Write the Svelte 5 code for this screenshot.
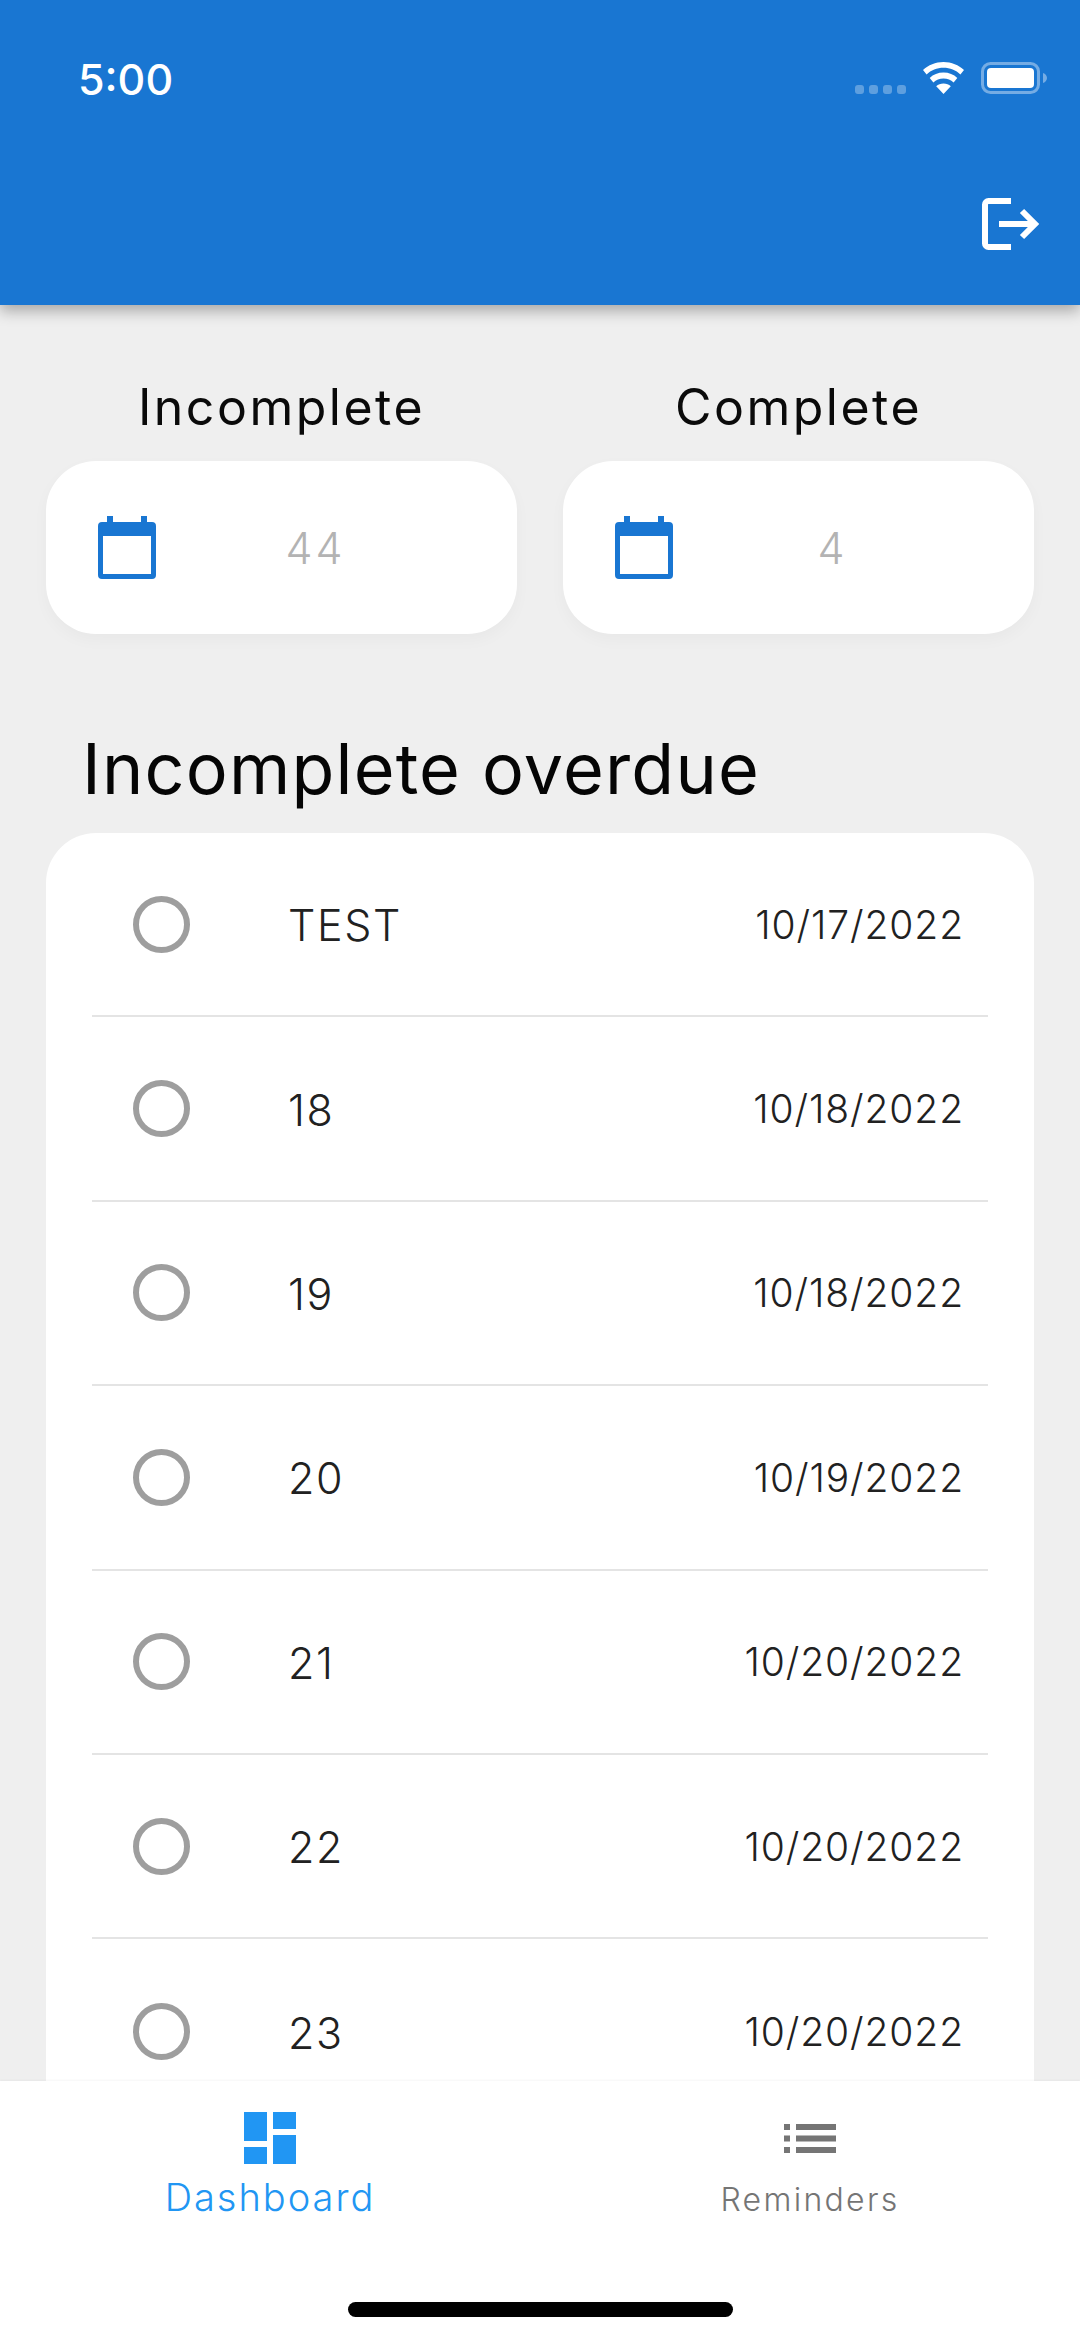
<script>
  // Dashboard screen: task counters and overdue reminder list
  const stats = [
    { label: 'Incomplete', value: 44 },
    { label: 'Complete', value: 4 }
  ];

  const overdue = [
    { name: 'TEST', date: '10/17/2022' },
    { name: '18', date: '10/18/2022' },
    { name: '19', date: '10/18/2022' },
    { name: '20', date: '10/19/2022' },
    { name: '21', date: '10/20/2022' },
    { name: '22', date: '10/20/2022' },
    { name: '23', date: '10/20/2022' }
  ];
</script>

<div class="screen">
  <header class="appbar">
    <div class="statusbar">
      <span class="time">5:00</span>
      <div class="status-icons">
        <div class="signal"><i></i><i></i><i></i><i></i></div>
        <svg class="wifi" viewBox="0 0 43 32" aria-hidden="true">
          <path d="M21.5 0C13.5 0 6.3 3 1 8l3.6 4.4C9 8.300 15 5.800 21.500 5.800S34 8.300 38.400 12.400L42 8C36.700 3 29.500 0 21.500 0Z" fill="#fff" />
          <path d="M21.500 10.500c-5.400 0-10.200 2-13.800 5.400l3.700 4.500c2.600-2.400 6.200-3.900 10.100-3.900s7.500 1.500 10.100 3.900l3.700-4.500c-3.600-3.400-8.400-5.400-13.800-5.400Z" fill="#fff" />
          <path d="M21.500 21.500c-2.900 0-5.400 1-7.300 2.700l7.300 7.800 7.300-7.800c-1.900-1.700-4.400-2.700-7.300-2.700Z" fill="#fff" />
        </svg>
        <svg class="battery" viewBox="0 0 67 32" aria-hidden="true">
          <rect x="1.500" y="1.500" width="56" height="29" rx="8" fill="none" stroke="#fff" stroke-opacity="0.4" stroke-width="3" />
          <rect x="6" y="6" width="47" height="20" rx="4" fill="#fff" />
          <path d="M62 11c2.500.8 4 2.800 4 5s-1.500 4.200-4 5Z" fill="#fff" fill-opacity="0.4" />
        </svg>
      </div>
    </div>
    <div class="actions">
      <svg class="logout" viewBox="0 0 58 52" aria-hidden="true">
        <path d="M29 3H6.500A3.500 3.500 0 0 0 3 6.500v39A3.500 3.500 0 0 0 6.500 49H29" fill="none" stroke="#fff" stroke-width="6" />
        <path d="M17 26h37M40 13l13 13-13 13" fill="none" stroke="#fff" stroke-width="6" />
      </svg>
    </div>
  </header>

  <main class="content">
    <section class="stats">
      {#each stats as stat}
        <div class="stat">
          <h2>{stat.label}</h2>
          <div class="stat-card">
            <svg class="calendar" viewBox="0 0 58 63" aria-hidden="true">
              <path fill-rule="evenodd" d="M9 0h6v6h28V0h6v6h5a4 4 0 0 1 4 4v49a4 4 0 0 1-4 4H4a4 4 0 0 1-4-4V10a4 4 0 0 1 4-4h5ZM5 20v38h48V20Z" fill="#1976d2" />
            </svg>
            <span class="stat-value">{stat.value}</span>
          </div>
        </div>
      {/each}
    </section>

    <h1>Incomplete overdue</h1>

    <ul class="list">
      {#each overdue as item}
        <li>
          <span class="radio"></span>
          <span class="name">{item.name}</span>
          <span class="date">{item.date}</span>
        </li>
      {/each}
    </ul>
  </main>

  <nav class="tabbar">
    <div class="tabs">
      <div class="tab active">
        <svg class="tab-icon" viewBox="0 0 52 52" aria-hidden="true">
          <path d="M0 0h23v29H0ZM29 0h23v17H29ZM29 23h23v29H29ZM0 35h23v17H0Z" fill="#2196f3" />
        </svg>
        <span>Dashboard</span>
      </div>
      <div class="tab">
        <svg class="tab-icon" viewBox="0 0 52 52" aria-hidden="true">
          <path d="M0 12h6v6H0ZM12 12h40v6H12ZM0 23.500h6v6H0ZM12 23.500h40v6H12ZM0 35h6v6H0ZM12 35h40v6H12Z" fill="#757575" />
        </svg>
        <span>Reminders</span>
      </div>
    </div>
    <div class="home-bar"></div>
  </nav>
</div>

<style>
  :global(body) {
    margin: 0;
    background: #efefef;
  }

  .screen {
    display: flex;
    flex-direction: column;
    width: 1080px;
    height: 2340px;
    overflow: hidden;
    background: #efefef;
    font-family: Inter, 'Liberation Sans', sans-serif;
  }

  .appbar {
    position: relative;
    z-index: 2;
    flex: none;
    box-sizing: border-box;
    height: 305px;
    padding: 52px 32px 0 78px;
    background: #1976d2;
    box-shadow: 0 6px 14px rgba(0, 0, 0, 0.3);
  }

  .statusbar {
    display: flex;
    align-items: flex-start;
    justify-content: space-between;
  }

  .time {
    color: #fff;
    font-size: 43px;
    font-weight: 500;
    line-height: 54px;
  }

  .status-icons {
    display: flex;
    align-items: flex-start;
    padding-top: 10px;
  }

  .signal {
    display: flex;
    gap: 5px;
    margin: 23px 16px 0 0;
  }

  .signal i {
    width: 9px;
    height: 9px;
    border-radius: 3px;
    background: rgba(255, 255, 255, 0.3);
  }

  .wifi {
    width: 43px;
    height: 32px;
    margin-right: 16px;
  }

  .battery {
    width: 67px;
    height: 32px;
  }

  .actions {
    display: flex;
    justify-content: flex-end;
    margin-top: 92px;
    padding-right: 8px;
  }

  .logout {
    width: 58px;
    height: 52px;
  }

  .content {
    flex: 1;
    min-height: 0;
    overflow: hidden;
    padding: 0 46px;
  }

  .stats {
    display: grid;
    grid-template-columns: 471px 471px;
    gap: 46px;
    padding-top: 67px;
  }

  h2 {
    margin: 0 0 19px;
    color: #0a0a0a;
    font-size: 50px;
    font-weight: 400;
    line-height: 70px;
    text-align: center;
    letter-spacing: 2.5px;
  }

  .stat-card {
    display: flex;
    align-items: center;
    height: 173px;
    padding-left: 52px;
    border-radius: 50px;
    background: #fff;
    box-shadow: 0 6px 16px rgba(0, 0, 0, 0.03);
  }

  .calendar {
    flex: none;
    width: 58px;
    height: 63px;
    margin-top: -1px;
  }

  .stat-value {
    flex: 1;
    padding-right: 42px;
    color: #b3b3b3;
    font-size: 43px;
    font-weight: 300;
    text-align: center;
    letter-spacing: 3px;
  }

  h1 {
    margin: 90px 0 19px 36px;
    color: #050505;
    font-size: 70px;
    font-weight: 400;
    line-height: 90px;
    letter-spacing: 1.2px;
  }

  .list {
    margin: 0;
    padding: 0 46px;
    border-radius: 50px 50px 0 0;
    background: #fff;
    list-style: none;
  }

  li {
    display: flex;
    align-items: center;
    box-sizing: border-box;
    height: 184.4px;
    border-bottom: 2px solid #e4e4e4;
    color: #212121;
  }

  li:last-child {
    border-bottom: 0;
  }

  .radio {
    flex: none;
    box-sizing: border-box;
    width: 57px;
    height: 57px;
    margin: 0 0 0 41px;
    border: 6px solid #9e9e9e;
    border-radius: 50%;
  }

  .name {
    flex: 1;
    margin-left: 98px;
    padding-top: 2px;
    font-size: 43px;
    font-weight: 350;
    letter-spacing: 1.6px;
  }

  .date {
    margin-right: 24px;
    font-size: 39px;
    font-weight: 350;
    letter-spacing: 0.9px;
  }

  .tabbar {
    position: relative;
    z-index: 1;
    flex: none;
    box-sizing: border-box;
    height: 259px;
    background: #fff;
    box-shadow: 0 -1px 2px rgba(0, 0, 0, 0.04);
  }

  .tabs {
    display: grid;
    grid-template-columns: 540px 540px;
    height: 221px;
  }

  .tab {
    display: flex;
    flex-direction: column;
    align-items: center;
    padding-top: 31px;
    color: #757575;
    font-size: 32px;
    font-weight: 300;
    letter-spacing: 2.3px;
  }

  .tab span {
    margin-top: 16px;
    line-height: 40px;
  }

  .tab.active {
    color: #2196f3;
    font-size: 38px;
    letter-spacing: 2px;
  }

  .tab.active span {
    margin-top: 13px;
  }

  .tab-icon {
    width: 52px;
    height: 52px;
  }

  .home-bar {
    width: 385px;
    height: 15px;
    margin-left: 348px;
    border-radius: 8px;
    background: #000;
  }
</style>
